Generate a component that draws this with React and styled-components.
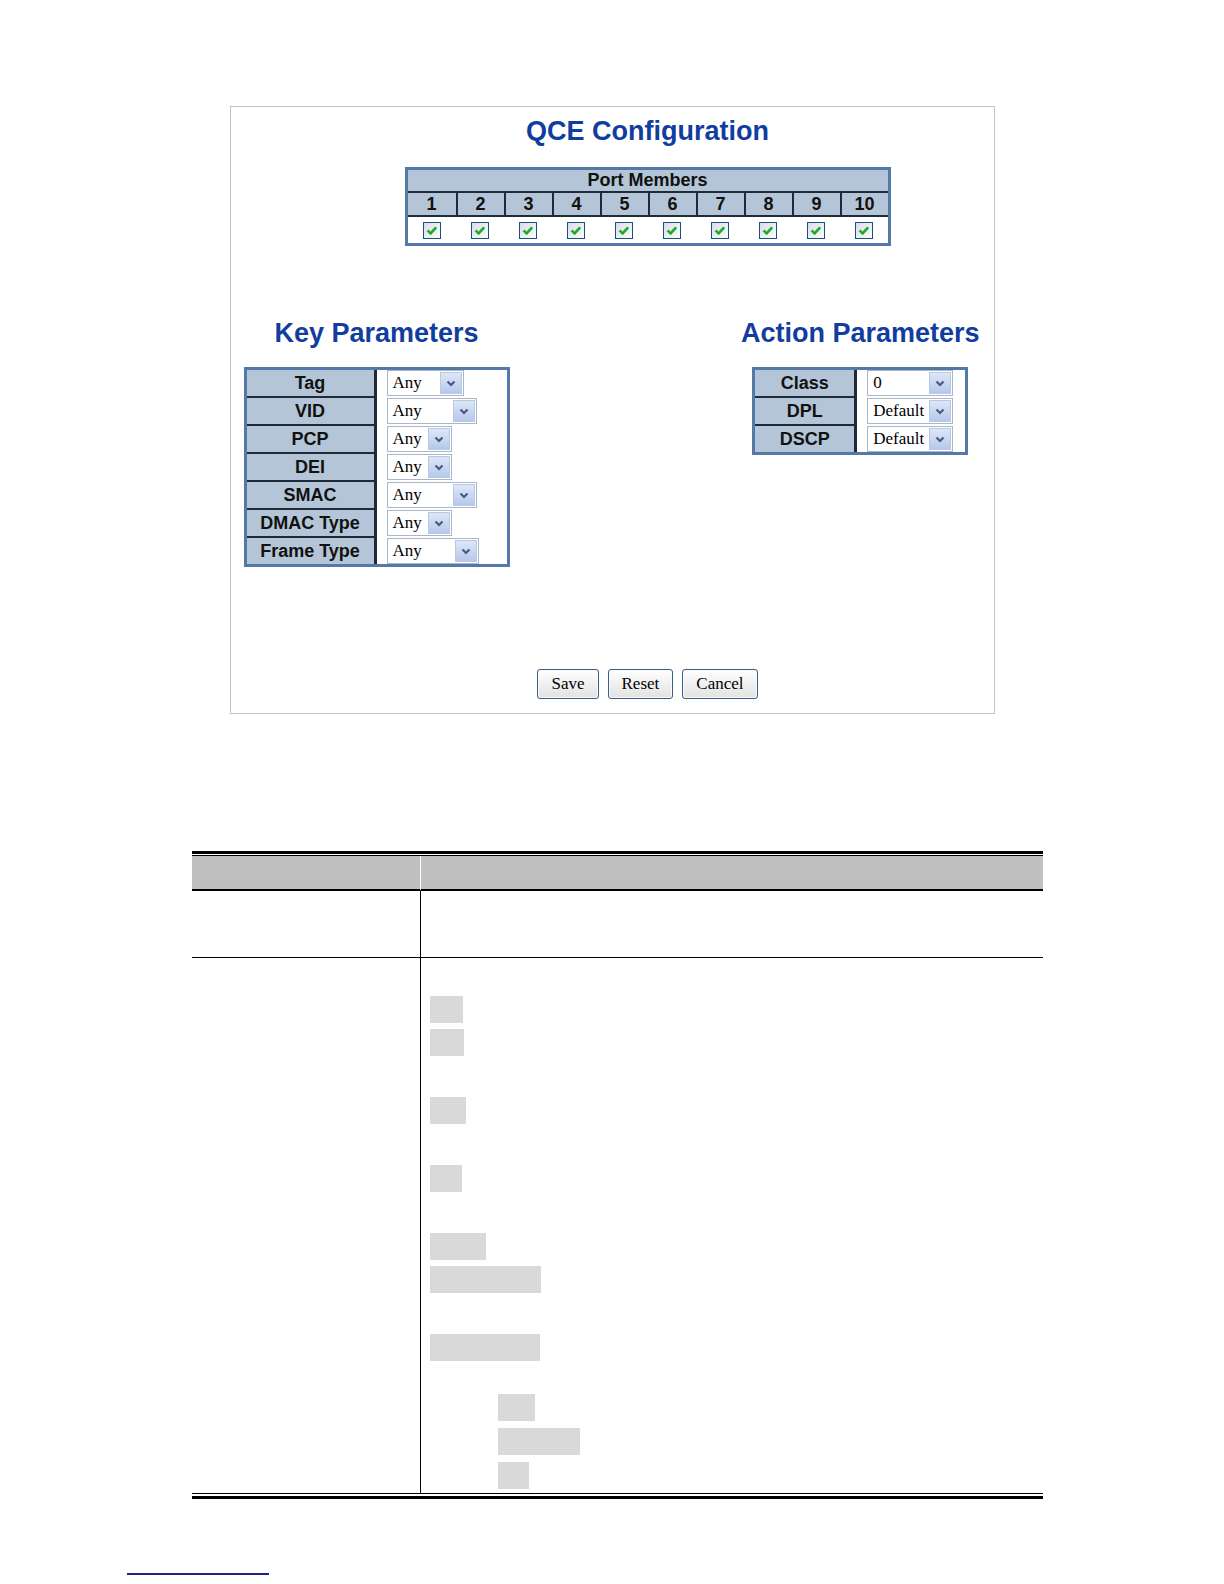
import styled, { createGlobalStyle } from "styled-components";

const GlobalStyle = createGlobalStyle`
  body {
    margin: 0;
    background: #fff;
    font-family: "Liberation Sans", Arial, sans-serif;
  }
`;

const Page = styled.div`
  width: 1224px;
  min-height: 1584px;
  padding-top: 106px;
  box-sizing: border-box;
`;

const Frame = styled.div`
  width: 765px;
  height: 608px;
  margin: 0 auto;
  box-sizing: border-box;
  border: 1px solid #c3c3c3;
  padding-top: 9px;
  display: flex;
  flex-direction: column;
`;

const CenterColumn = styled.div`
  display: flex;
  flex-direction: column;
  align-items: center;
  padding-left: 71px;
  margin-top: ${(p) => p.$top || 0}px;
`;

const Heading = styled.h1`
  margin: 0;
  font-family: "Liberation Sans", Arial, sans-serif;
  font-size: 27px;
  line-height: 31px;
  font-weight: bold;
  color: #113d9f;
  white-space: nowrap;
`;

const PortTable = styled.table`
  width: 486px;
  margin-top: 20px;
  border: 3px solid #5479a6;
  border-collapse: separate;
  border-spacing: 0;
  table-layout: fixed;
  font-family: "Liberation Sans", Arial, sans-serif;
  font-weight: bold;
  font-size: 18px;
  color: #111;
`;

const PortHead = styled.th`
  height: 21px;
  padding: 0;
  line-height: 21px;
  background: #b3c5d6;
  border-bottom: 2px solid #1e2a38;
  text-align: center;
`;

const PortNum = styled.th`
  height: 22px;
  padding: 0;
  line-height: 22px;
  background: #b3c5d6;
  border-bottom: 2px solid #1e2a38;
  border-left: ${(p) => (p.$first ? "none" : "2px solid #1e2a38")};
  text-align: center;
`;

const CheckCell = styled.td`
  height: 26px;
  padding: 0;
  text-align: center;
  vertical-align: middle;
  background: #fff;
  line-height: 0;
`;

const ParamsRow = styled.div`
  display: flex;
  justify-content: space-between;
  align-items: flex-start;
  margin-top: 72px;
  padding: 0 14px 0 13px;
`;

const ParamBlock = styled.div`
  display: flex;
  flex-direction: column;
  align-items: center;
`;

const ParamTable = styled.table`
  width: ${(p) => p.$width}px;
  margin-top: 18px;
  border: 3px solid #5479a6;
  border-collapse: separate;
  border-spacing: 0;
  table-layout: fixed;
`;

const LabelCell = styled.th`
  width: ${(p) => p.$width}px;
  height: 26px;
  padding: 0;
  background: #b3c5d6;
  border-right: 3px solid #1e2a38;
  border-bottom: ${(p) => (p.$last ? "none" : "2px solid #1e2a38")};
  font-family: "Liberation Sans", Arial, sans-serif;
  font-size: 18px;
  font-weight: bold;
  color: #111;
  text-align: center;
  white-space: nowrap;
`;

const ValueCell = styled.td`
  padding: 0 0 0 10px;
  vertical-align: top;
  background: #fff;
`;

const SelectBox = styled.div`
  display: flex;
  align-items: center;
  justify-content: space-between;
  width: ${(p) => p.$width}px;
  height: 26px;
  box-sizing: border-box;
  border: 1px solid #aab7ca;
  background: #fff;
  padding: 0 1px 0 5px;
  font-family: "Liberation Serif", "Times New Roman", serif;
  font-size: 17px;
  color: #000;
`;

const ArrowButton = styled.span`
  display: flex;
  align-items: center;
  justify-content: center;
  width: 22px;
  height: 22px;
  box-sizing: border-box;
  border: 1px solid #b9c8e3;
  background: linear-gradient(#dde7f7, #b6c8eb);
`;

const Buttons = styled.div`
  display: flex;
  gap: 9px;
`;

const Button = styled.button`
  height: 30px;
  padding: 0 13px;
  border: 1px solid #3b5e88;
  border-radius: 3px;
  background: linear-gradient(#ffffff, #e2e2e2);
  box-shadow: inset 0 0 0 1px #fafafa;
  font-family: "Liberation Serif", "Times New Roman", serif;
  font-size: 17px;
  color: #000;
`;

const DocTable = styled.div`
  width: 851px;
  margin: 137px 0 0 192px;
  border-top: 3px solid #000;
  border-bottom: 3px solid #000;
  padding: 1px 0 2px;
`;

const DocGrid = styled.div`
  display: grid;
  grid-template-columns: 229px 1fr;
  border-top: 1px solid #000;
  border-bottom: 1px solid #000;
`;

const DocHead = styled.div`
  height: 33px;
  background: #c0c0c0;
  border-bottom: 2px solid #000;
  border-right: ${(p) => (p.$first ? "1px solid #fff" : "none")};
`;

const DocCell = styled.div`
  height: ${(p) => p.$height}px;
  box-sizing: border-box;
  border-right: ${(p) => (p.$first ? "1px solid #000" : "none")};
  border-bottom: ${(p) => (p.$last ? "none" : "1px solid #000")};
  padding: ${(p) => (p.$first ? "0" : "38px 0 0 9px")};
`;

const Mark = styled.span`
  display: block;
  width: ${(p) => p.$width}px;
  height: 27px;
  margin-top: ${(p) => p.$gap}px;
  margin-left: ${(p) => p.$indent || 0}px;
  background: #d9d9d9;
`;

const FooterLink = styled.div`
  width: 142px;
  margin: 74px 0 0 127px;
  border-top: 2px solid #1f1f8c;
`;

const Checkbox = () => (
  <svg width="18" height="17" viewBox="0 0 18 17">
    <defs>
      <linearGradient id="cbg" x1="0" y1="0" x2="1" y2="1">
        <stop offset="0" stopColor="#d8dce3" />
        <stop offset="1" stopColor="#fdfdfd" />
      </linearGradient>
    </defs>
    <rect x="0.5" y="0.5" width="17" height="16" fill="url(#cbg)" stroke="#1c4f80" />
    <path d="M4.6 8.4 L7.6 11.4 L13.2 5.4" stroke="#22a822" strokeWidth="2.6" fill="none" />
  </svg>
);

const Select = ({ value, width }) => (
  <SelectBox $width={width}>
    <span>{value}</span>
    <ArrowButton>
      <svg width="10" height="7" viewBox="0 0 10 7">
        <path d="M1.5 1.5 L5 5 L8.5 1.5" stroke="#475a84" strokeWidth="2.2" fill="none" />
      </svg>
    </ArrowButton>
  </SelectBox>
);

const keyParams = [
  ["Tag", 77],
  ["VID", 90],
  ["PCP", 65],
  ["DEI", 65],
  ["SMAC", 90],
  ["DMAC Type", 65],
  ["Frame Type", 92],
];

const actionParams = [
  ["Class", "0"],
  ["DPL", "Default"],
  ["DSCP", "Default"],
];

const marks = [
  { gap: 0, width: 33 },
  { gap: 6, width: 34 },
  { gap: 41, width: 36 },
  { gap: 41, width: 32 },
  { gap: 41, width: 56 },
  { gap: 6, width: 111 },
  { gap: 41, width: 110 },
  { gap: 33, width: 37, indent: 68 },
  { gap: 7, width: 82, indent: 68 },
  { gap: 7, width: 31, indent: 68 },
];

const ports = [1, 2, 3, 4, 5, 6, 7, 8, 9, 10];

const App = () => {
  return (
    <Page>
      <GlobalStyle />
      <Frame>
        <CenterColumn>
          <Heading>QCE Configuration</Heading>
          <PortTable>
            <thead>
              <tr>
                <PortHead colSpan={10}>Port Members</PortHead>
              </tr>
              <tr>
                {ports.map((n) => (
                  <PortNum key={n} $first={n === 1}>
                    {n}
                  </PortNum>
                ))}
              </tr>
            </thead>
            <tbody>
              <tr>
                {ports.map((n) => (
                  <CheckCell key={n}>
                    <Checkbox />
                  </CheckCell>
                ))}
              </tr>
            </tbody>
          </PortTable>
        </CenterColumn>

        <ParamsRow>
          <ParamBlock>
            <Heading>Key Parameters</Heading>
            <ParamTable $width={266}>
              <tbody>
                {keyParams.map(([label, w], i) => (
                  <tr key={label}>
                    <LabelCell $width={127} $last={i === keyParams.length - 1}>
                      {label}
                    </LabelCell>
                    <ValueCell>
                      <Select value="Any" width={w} />
                    </ValueCell>
                  </tr>
                ))}
              </tbody>
            </ParamTable>
          </ParamBlock>

          <ParamBlock>
            <Heading>Action Parameters</Heading>
            <ParamTable $width={216}>
              <tbody>
                {actionParams.map(([label, value], i) => (
                  <tr key={label}>
                    <LabelCell $width={99} $last={i === actionParams.length - 1}>
                      {label}
                    </LabelCell>
                    <ValueCell>
                      <Select value={value} width={86} />
                    </ValueCell>
                  </tr>
                ))}
              </tbody>
            </ParamTable>
          </ParamBlock>
        </ParamsRow>

        <CenterColumn $top={102}>
          <Buttons>
            <Button>Save</Button>
            <Button>Reset</Button>
            <Button>Cancel</Button>
          </Buttons>
        </CenterColumn>
      </Frame>

      <DocTable>
        <DocGrid>
          <DocHead $first />
          <DocHead />
          <DocCell $first $height={67} />
          <DocCell $height={67} />
          <DocCell $first $last $height={535} />
          <DocCell $last $height={535}>
            {marks.map((m, i) => (
              <Mark key={i} $gap={m.gap} $width={m.width} $indent={m.indent} />
            ))}
          </DocCell>
        </DocGrid>
      </DocTable>

      <FooterLink />
    </Page>
  );
};

export default App;
